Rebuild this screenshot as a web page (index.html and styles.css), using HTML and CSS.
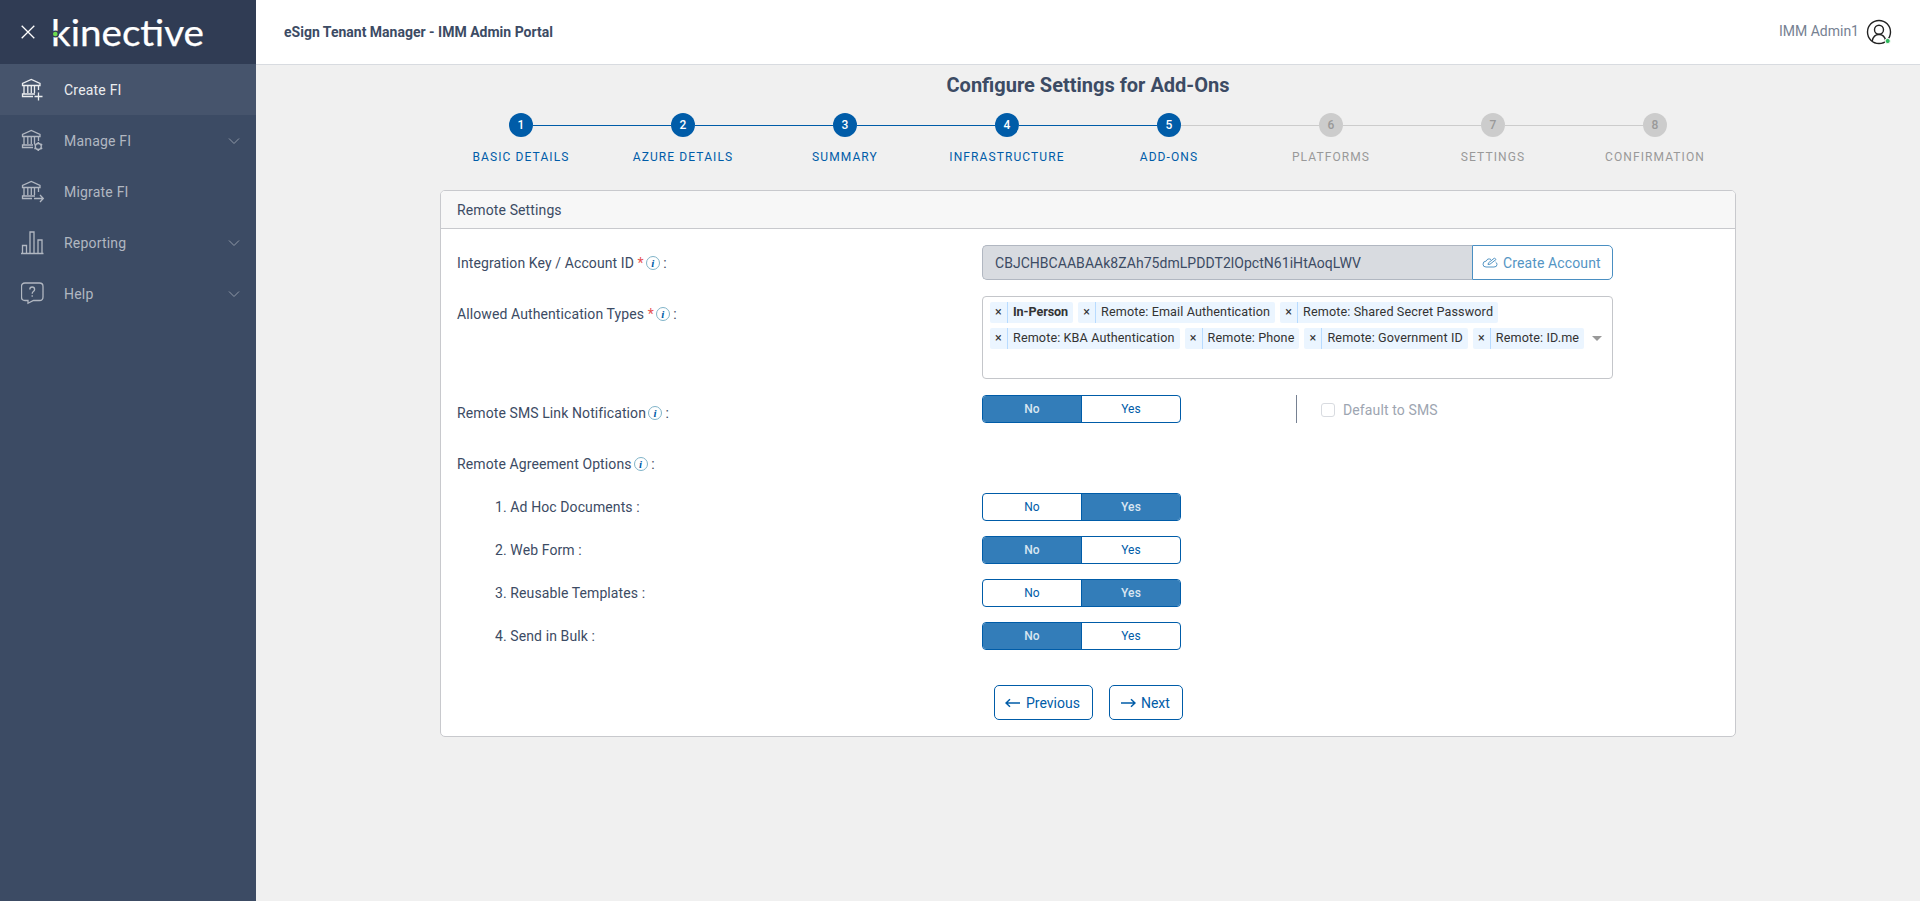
FILE: index.html
```html
<!DOCTYPE html>
<html lang="en">
<head>
    <meta charset="utf-8">
    <title>eSign Tenant Manager - IMM Admin Portal</title>
    <link rel="stylesheet" href="styles.css">
</head>
<body>

<!-- shared icons -->
<svg class="defs" width="0" height="0">
    <symbol id="bank" viewBox="0 0 24 24">
        <path d="M1.500 7.500V5.500L10.300 1.500L19 5.500V7.500ZM3 8V16M6.800 8V15M10.300 8V15M13.500 8V15M17.500 8V12"/>
    </symbol>
    <symbol id="chevron" viewBox="0 0 12 12">
        <path d="M1 3.500L6 8.500L11 3.500"/>
    </symbol>
</svg>

<div class="app">
    <aside class="sidebar">
        <div class="brand">
            <svg class="close" width="14" height="14" viewBox="0 0 14 14"><path d="M.7.700l12.600 12.600M13.300.700L.700 13.300"/></svg>
            <svg class="logo" width="160" height="47" viewBox="0 0 160 47">
                <text x="-2" y="37" textLength="153" lengthAdjust="spacingAndGlyphs">kinective</text>
                <circle class="logo-gap" cx="2.500" cy="25" r="3.600"/>
                <circle class="logo-dot" cx="2.300" cy="25" r="2.300"/>
            </svg>
        </div>
        <nav class="nav">
            <a class="nav-item active">
                <svg class="nav-icon" width="24" height="24" viewBox="0 0 24 24"><use href="#bank"/><path d="M14 16H1.500V18.500H12M17.500 14.500V22.500M13.500 18.500H21.500"/></svg>
                <span>Create FI</span>
            </a>
            <a class="nav-item">
                <svg class="nav-icon" width="24" height="24" viewBox="0 0 24 24"><use href="#bank"/><path d="M12 16H1.500V18.500H12"/><circle cx="17.300" cy="17.500" r="3"/><path d="M17.300 13V14.500M17.300 20.500V22M13.400 15.300L14.700 16M19.900 19L21.200 19.700M13.400 19.700L14.700 19M19.900 16L21.200 15.300" stroke-width="1.600"/></svg>
                <span>Manage FI</span>
                <svg class="chevron" width="12" height="12"><use href="#chevron"/></svg>
            </a>
            <a class="nav-item">
                <svg class="nav-icon" width="24" height="24" viewBox="0 0 24 24"><use href="#bank"/><path d="M14 16H1.500V18.500H11M13 18.500H22M19 15L22.300 18.500L19 22"/></svg>
                <span>Migrate FI</span>
            </a>
            <a class="nav-item">
                <svg class="nav-icon" width="24" height="24" viewBox="0 0 24 24"><path d="M0 22.500H22.500M1.500 22V14.500H5.500V22M9 22V1H13V22M17 22V9H21V22"/></svg>
                <span>Reporting</span>
                <svg class="chevron" width="12" height="12"><use href="#chevron"/></svg>
            </a>
            <a class="nav-item">
                <svg class="nav-icon" width="24" height="24" viewBox="0 0 24 24"><path d="M4 1H18.500Q22 1 22 4.500V15Q22 18.500 18.500 18.500H12.500L7 21.300V18.500H4Q.500 18.500 .500 15V4.500Q.500 1 4 1ZM8.800 7.500Q8.800 5 11.200 5T13.600 7.500Q13.600 8.700 12.300 9.500Q11.200 10.200 11.200 11.800M11.200 13.300V14.800"/></svg>
                <span>Help</span>
                <svg class="chevron" width="12" height="12"><use href="#chevron"/></svg>
            </a>
        </nav>
    </aside>

    <div class="main">
        <header class="header">
            <strong>eSign Tenant Manager - IMM Admin Portal</strong>
            <div class="user">
                <span>IMM Admin1</span>
                <svg width="26" height="26" viewBox="0 0 26 26">
                    <circle cx="13" cy="13" r="11.500"/>
                    <circle cx="13" cy="10.800" r="4.500"/>
                    <path d="M6.200 22Q7.500 15.500 13 15.500T19.800 22"/>
                    <circle class="online" cx="21.700" cy="22" r="2.600"/>
                </svg>
            </div>
        </header>

        <main class="content">
            <h1>Configure Settings for Add-Ons</h1>
            <ol class="steps">
                <li class="done"><b>1</b><span>Basic Details</span></li>
                <li class="done"><b>2</b><span>Azure Details</span></li>
                <li class="done"><b>3</b><span>Summary</span></li>
                <li class="done"><b>4</b><span>Infrastructure</span></li>
                <li class="done"><b>5</b><span>Add-Ons</span></li>
                <li><b>6</b><span>Platforms</span></li>
                <li><b>7</b><span>Settings</span></li>
                <li><b>8</b><span>Confirmation</span></li>
            </ol>

            <section class="card">
                <div class="card-header">Remote Settings</div>
                <div class="card-body">
                    <div class="row">
                        <div class="label">Integration Key / Account ID <i class="req">*</i><i class="info">i</i> :</div>
                        <div class="input-group">
                            <div class="input">CBJCHBCAABAAk8ZAh75dmLPDDT2lOpctN61iHtAoqLWV</div>
                            <button class="create">
                                <svg width="16" height="12" viewBox="0 0 16 12"><path d="M9 2.500Q5.500.800 4.300 4Q1 4.300 1 7.200Q1 10 4 10H12Q15 10 15 7.500Q15 5.800 13.500 5M6 7.500L6.500 5.800L12.500 1L14 2.500L8 7.200Z"/></svg>
                                Create Account
                            </button>
                        </div>
                    </div>
                    <div class="row">
                        <div class="label">Allowed Authentication Types <i class="req">*</i><i class="info">i</i> :</div>
                        <div class="select">
                            <div class="tags">
                                <div class="tag"><i>×</i><b>In-Person</b></div>
                                <div class="tag"><i>×</i><span>Remote: Email Authentication</span></div>
                                <div class="tag"><i>×</i><span>Remote: Shared Secret Password</span></div>
                                <div class="tag"><i>×</i><span>Remote: KBA Authentication</span></div>
                                <div class="tag"><i>×</i><span>Remote: Phone</span></div>
                                <div class="tag"><i>×</i><span>Remote: Government ID</span></div>
                                <div class="tag"><i>×</i><span>Remote: ID.me</span></div>
                            </div>
                            <div class="arrow"></div>
                        </div>
                    </div>
                    <div class="row">
                        <div class="label">Remote SMS Link Notification<i class="info">i</i> :</div>
                        <div class="toggle"><span class="on">No</span><span>Yes</span></div>
                        <div class="default-sms"><i class="checkbox"></i>Default to SMS</div>
                    </div>
                    <div class="row heading">
                        <div class="label">Remote Agreement Options<i class="info">i</i> :</div>
                    </div>
                    <div class="row option">
                        <div class="label">1. Ad Hoc Documents :</div>
                        <div class="toggle"><span>No</span><span class="on">Yes</span></div>
                    </div>
                    <div class="row option">
                        <div class="label">2. Web Form :</div>
                        <div class="toggle"><span class="on">No</span><span>Yes</span></div>
                    </div>
                    <div class="row option">
                        <div class="label">3. Reusable Templates :</div>
                        <div class="toggle"><span>No</span><span class="on">Yes</span></div>
                    </div>
                    <div class="row option">
                        <div class="label">4. Send in Bulk :</div>
                        <div class="toggle"><span class="on">No</span><span>Yes</span></div>
                    </div>
                    <div class="actions">
                        <button class="btn"><svg width="16" height="10" viewBox="0 0 16 10"><path d="M15 5H1.500M5 1.200L1 5L5 8.800"/></svg>Previous</button>
                        <button class="btn"><svg width="16" height="10" viewBox="0 0 16 10"><path d="M1 5H14.500M11 1.200L15 5L11 8.800"/></svg>Next</button>
                    </div>
                </div>
            </section>
        </main>
    </div>
</div>

</body>
</html>
```

FILE: styles.css
```css
* {
    box-sizing: border-box;
}
body {
    margin: 0;
    font-family: Roboto, "Liberation Sans", sans-serif;
    font-size: 14px;
    line-height: 21px;
    letter-spacing: 0.12px;
    color: #3c4b64;
    background: #f0f0f0;
}
svg {
    flex-shrink: 0;
    fill: none;
    stroke: currentColor;
}
i {
    font-style: normal;
}
button {
    font: inherit;
    letter-spacing: inherit;
    background: #fff;
}
.defs {
    position: absolute;
}
.app {
    display: flex;
    min-height: 901px;
}

/* sidebar */
.sidebar {
    width: 256px;
    flex-shrink: 0;
    background: #3c4b64;
}
.brand {
    display: flex;
    align-items: center;
    height: 64px;
    padding-left: 21px;
    color: #fff;
    background: #303c54;
}
.close {
    stroke-width: 1.3;
}
.logo {
    margin-left: 18px;
    overflow: visible;
}
.logo text {
    font: 37px Lato, sans-serif;
    letter-spacing: 0;
    fill: #fff;
    stroke: #fff;
    stroke-width: 0.25;
}
.logo-gap {
    fill: #303c54;
    stroke: none;
}
.logo-dot {
    fill: #6cdb4e;
    stroke: none;
}
.nav-item {
    display: flex;
    align-items: center;
    height: 51px;
    padding: 0 16px 0 21px;
    letter-spacing: 0.2px;
    color: #b1b7c1;
}
.nav-item span {
    margin-left: 19px;
    padding-top: 2px;
    flex: 1;
}
.nav-item.active {
    color: #ebedef;
    background: #46546c;
}
.nav-icon {
    stroke-width: 1.3;
}
.chevron {
    color: #9099a7;
}

/* header */
.main {
    flex: 1;
}
.header {
    display: flex;
    align-items: center;
    justify-content: space-between;
    height: 65px;
    padding: 0 28px;
    background: #fff;
    border-bottom: 1px solid #d8dbe0;
}
.header strong {
    padding-top: 1px;
    letter-spacing: 0;
}
.user {
    display: flex;
    align-items: center;
    gap: 7px;
    letter-spacing: 0;
    color: #768192;
}
.user span {
    margin-top: -2px;
}
.user svg {
    color: #222;
    stroke-width: 1.4;
}
.user .online {
    fill: #2eb85c;
    stroke: #fff;
    stroke-width: 1;
}

/* wizard */
.content {
    width: 1296px;
    margin: 0 auto;
}
h1 {
    margin: 0;
    padding-top: 8px;
    font-size: 20px;
    line-height: 24px;
    letter-spacing: 0;
    text-align: center;
}
.steps {
    display: flex;
    margin: 0;
    padding: 16px 0 0;
    list-style: none;
}
.steps li {
    flex: 1;
    display: grid;
    grid-template-columns: 1fr 24px 1fr;
    align-items: center;
    color: #999;
}
.steps li::before,
.steps li::after {
    content: "";
    height: 1px;
    margin-top: 1px;
    background: #ccc;
}
.steps li::before {
    grid-area: 1 / 1;
}
.steps li::after {
    grid-area: 1 / 3;
}
.steps b {
    grid-area: 1 / 2;
    height: 24px;
    line-height: 25px;
    border-radius: 50%;
    font-size: 12px;
    font-weight: 500;
    text-align: center;
    background: #ccc;
}
.steps span {
    grid-area: 2 / 1 / 3 / 4;
    margin-top: 10px;
    font-size: 12px;
    letter-spacing: 1.1px;
    text-align: center;
    text-transform: uppercase;
}
.steps .done {
    color: #005ca8;
}
.steps .done::before,
.steps .done:not(:nth-child(5))::after,
.steps .done b {
    background: #005ca8;
}
.steps .done b {
    color: #fff;
}
.steps li:first-child::before,
.steps li:last-child::after {
    visibility: hidden;
}

/* card */
.card {
    height: 547px;
    margin-top: 22px;
    background: #fff;
    border: 1px solid #c8c9cd;
    border-radius: 5px;
}
.card-header {
    height: 38px;
    padding: 9px 16px;
    background: #f7f7f7;
    border-bottom: 1px solid #c8c9cd;
    border-radius: 4px 4px 0 0;
}
.card-body {
    padding: 16px;
}
.row {
    display: flex;
    min-height: 35px;
    margin-bottom: 16px;
}
.label {
    width: 525px;
    padding-top: 8px;
    letter-spacing: 0.1px;
}
.req {
    color: #e55353;
}
.info {
    display: inline-block;
    width: 14px;
    height: 14px;
    margin: 0 0 0 2px;
    font: italic bold 11px/12px "Liberation Serif", serif;
    text-align: center;
    vertical-align: 1px;
    color: #005ca8;
    border: 1px solid #7fb3c8;
    border-radius: 50%;
}
.input-group {
    display: flex;
    width: 631px;
    height: 35px;
}
.input {
    flex: 1;
    padding: 7px 12px;
    letter-spacing: 0.04px;
    background: #d8dbe0;
    border: 1px solid #b1b7c1;
    border-right: 0;
    border-radius: 5px 0 0 5px;
}
.create {
    display: flex;
    align-items: center;
    gap: 5px;
    width: 141px;
    padding: 1px 0 0 9px;
    color: #5495c4;
    border: 1px solid #4a8fc2;
    border-radius: 0 5px 5px 0;
    white-space: nowrap;
}
.select {
    display: flex;
    width: 631px;
    height: 83px;
    border: 1px solid #c4c6ca;
    border-radius: 4px;
}
.tags {
    flex: 1;
    display: flex;
    flex-wrap: wrap;
    align-content: flex-start;
    gap: 5px;
    padding: 5px 0 0 7px;
}
.tag {
    display: flex;
    height: 21px;
    font-size: 12.6px;
    line-height: 20px;
    letter-spacing: 0.12px;
    color: #333;
    background: #ebf5ff;
    border-radius: 2px;
}
.tag i {
    width: 18px;
    text-align: center;
    border-right: 1px solid #b8dbff;
}
.tag b,
.tag span {
    padding: 0 5px;
}
.tag b {
    letter-spacing: -0.08px;
}
.arrow {
    width: 10px;
    margin: 39px 10px 0 0;
    height: 5px;
    background: #999;
    clip-path: polygon(0 0, 100% 0, 50% 100%);
}
.toggle {
    display: flex;
    width: 199px;
    height: 28px;
    font-size: 12px;
    line-height: 26px;
    text-align: center;
    color: #005ca8;
    border: 1px solid #005ca8;
    border-radius: 4px;
    overflow: hidden;
}
.toggle span {
    flex: 1;
}
.toggle span + span {
    border-left: 1px solid #005ca8;
}
.toggle .on {
    color: #d9e6f1;
    font-weight: 500;
    background: #337db9;
}
.default-sms {
    display: flex;
    align-items: center;
    height: 28px;
    margin-left: 115px;
    padding: 3px 0 0 24px;
    border-left: 1px solid #768192;
    color: #9da5b1;
}
.checkbox {
    width: 14px;
    height: 14px;
    margin: -2px 8px 0 0;
    border: 1px solid #d8dbe0;
    border-radius: 3px;
}
.heading {
    min-height: 31px;
}
.option {
    min-height: 28px;
    margin-bottom: 15px;
}
.option .label {
    padding: 4px 0 0 38px;
}
.actions {
    display: flex;
    gap: 16px;
    padding: 20px 0 0 537px;
}
.btn {
    display: flex;
    align-items: center;
    gap: 5px;
    height: 35px;
    padding: 1px 12px 0 10px;
    letter-spacing: 0;
    color: #005ca8;
    border: 1px solid #005ca8;
    border-radius: 5px;
}
.btn svg {
    stroke-width: 1.5;
}
```
